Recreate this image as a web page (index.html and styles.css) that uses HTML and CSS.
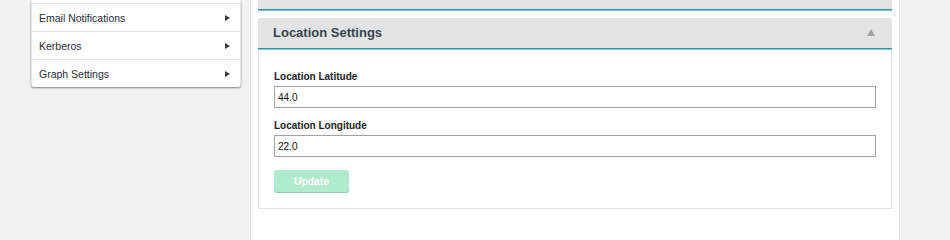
FILE: index.html
```html
<!DOCTYPE html>
<html lang="en">
<head>
<meta charset="utf-8">
<title>Location Settings</title>
<link rel="stylesheet" href="styles.css">
</head>
<body>
<div class="page">
  <aside class="sidebar">
    <ul class="menu">
      <li class="menu-cap"></li>
      <li class="menu-item"><span>Email Notifications</span><span class="arrow"></span></li>
      <li class="menu-item"><span>Kerberos</span><span class="arrow"></span></li>
      <li class="menu-item"><span>Graph Settings</span><span class="arrow"></span></li>
    </ul>
  </aside>
  <main class="content">
    <section class="panel panel-prev">
      <div class="panel-head panel-head-cut"></div>
    </section>
    <section class="panel">
      <header class="panel-head">
        <h2 class="panel-title">Location Settings</h2>
        <span class="caret-up"></span>
      </header>
      <form class="panel-body">
        <label class="field-label">Location Latitude</label>
        <input class="field-input" type="text" value="44.0">
        <label class="field-label">Location Longitude</label>
        <input class="field-input" type="text" value="22.0">
        <button class="btn-update" type="button">Update</button>
      </form>
    </section>
  </main>
</div>
</body>
</html>
```

FILE: styles.css
```css
* { box-sizing: border-box; }

html, body {
  height: 100%;
}

body {
  margin: 0;
  background: #f1f1f1;
  font-family: "Liberation Sans", Arial, sans-serif;
  color: #222;
}

.page {
  display: flex;
  align-items: flex-start;
  min-height: 100%;
}

/* ---------- sidebar ---------- */
.sidebar {
  margin-left: 31px;
  width: 210px;
}

.menu {
  list-style: none;
  margin: 0;
  padding: 0;
  background: #fff;
  border-left: 1px solid #e2e2e2;
  border-right: 1px solid #e2e2e2;
  border-radius: 0 0 3px 3px;
  box-shadow: 0 1px 2px rgba(0, 0, 0, 0.45);
}

.menu-cap {
  height: 4px;
  border-bottom: 1px solid #e2e2e2;
}

.menu-item {
  height: 28px;
  display: flex;
  align-items: center;
  justify-content: space-between;
  padding: 0 10px 0 7px;
  border-bottom: 1px solid #e2e2e2;
  font-size: 10.5px;
  color: #2a2c3e;
}

.menu-item:last-child {
  height: 27px;
  border-bottom: none;
}

.arrow {
  width: 0;
  height: 0;
  border-top: 3px solid transparent;
  border-bottom: 3px solid transparent;
  border-left: 5px solid #3a3a3a;
}

/* ---------- content ---------- */
.content {
  align-self: stretch;
  margin-left: 9px;
  width: 650px;
  min-height: 214px;
  background: #fff;
  border-left: 1px solid #e4e4e4;
  border-right: 1px solid #e4e4e4;
  padding: 0 7px;
}

.panel-head {
  height: 32px;
  display: flex;
  align-items: center;
  justify-content: space-between;
  padding: 0 17px 2px 15px;
  background: #e3e3e3;
  border-radius: 3px 3px 0 0;
  border-bottom: 1px solid #74c4d7;
  box-shadow: inset 0 -1px 0 #418fa6;
}

.panel-head-cut {
  height: 11px;
  border-radius: 0;
}

.panel-prev {
  margin-bottom: 7px;
}

.panel-title {
  margin: 0;
  font-size: 13px;
  font-weight: bold;
  color: #38434f;
}

.caret-up {
  width: 0;
  height: 0;
  border-left: 4.5px solid transparent;
  border-right: 4.5px solid transparent;
  border-bottom: 7px solid #a2a2a2;
}

.panel-body {
  display: flex;
  flex-direction: column;
  align-items: flex-start;
  border: 1px solid #e3e3e3;
  border-top: none;
  padding: 21px 15px 16px 15px;
}

.field-label {
  display: block;
  font-size: 10px;
  font-weight: bold;
  line-height: 12px;
  color: #222;
  margin-bottom: 3px;
}

.field-input {
  width: 100%;
  height: 22px;
  margin: 0 0 12px 0;
  padding: 0 3px;
  border: 1px solid #a2a2a2;
  border-radius: 0;
  font-family: "Liberation Sans", Arial, sans-serif;
  font-size: 10px;
  color: #111;
  background: #fff;
}

.field-input:last-of-type {
  margin-bottom: 13px;
}

.btn-update {
  width: 75px;
  height: 22px;
  border: none;
  border-radius: 3px;
  background: #b1ebcd;
  box-shadow: 0 1px 0 #99c9b1;
  color: #fff;
  font-family: "Liberation Sans", Arial, sans-serif;
  font-size: 10.4px;
  font-weight: bold;
  padding: 0;
}
```
